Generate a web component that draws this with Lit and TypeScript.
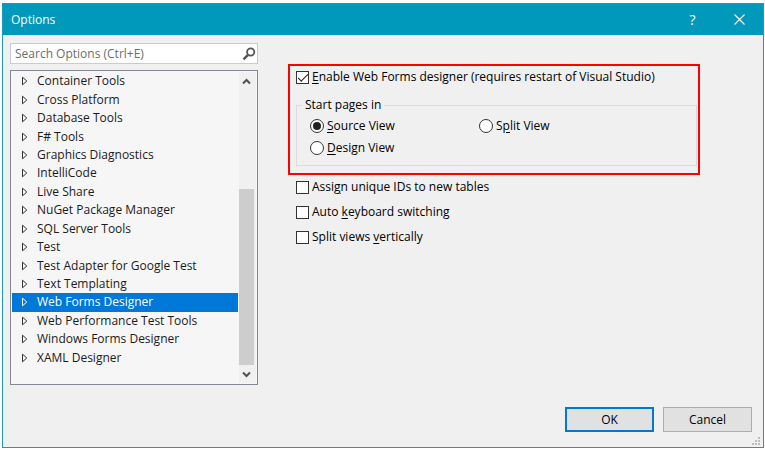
import { LitElement, html, css, svg } from "lit";
import { customElement, state } from "lit/decorators.js";
import { classMap } from "lit/directives/class-map.js";

const PAGES = [
  "Container Tools",
  "Cross Platform",
  "Database Tools",
  "F# Tools",
  "Graphics Diagnostics",
  "IntelliCode",
  "Live Share",
  "NuGet Package Manager",
  "SQL Server Tools",
  "Test",
  "Test Adapter for Google Test",
  "Text Templating",
  "Web Forms Designer",
  "Web Performance Test Tools",
  "Windows Forms Designer",
  "XAML Designer",
];

const GRIP = [[6, 0], [3, 3], [6, 3], [0, 6], [3, 6], [6, 6]];

@customElement("app-root")
export class AppRoot extends LitElement {
  @state() private selected = "Web Forms Designer";

  static styles = css`
    :host {
      display: block;
      box-sizing: border-box;
      min-height: 100vh;
      padding: 3px 1px 2px 2px;
      background: #fff;
      color: #1b1b1b;
      font: 12px/16px "Open Sans", "Noto Sans", sans-serif;
    }
    * {
      box-sizing: border-box;
    }
    button,
    input {
      font: inherit;
      color: inherit;
      margin: 0;
    }
    .dialog {
      position: relative;
      display: flex;
      flex-direction: column;
      min-height: calc(100vh - 5px);
      border: 1px solid #1a9bb8;
      background: #f0f0f0;
    }
    .titlebar {
      display: flex;
      align-items: center;
      height: 31px;
      padding-left: 8px;
      background: #0099bc;
      color: #fff;
    }
    .title {
      flex: 1;
      margin: 0;
      font: inherit;
    }
    .caption {
      display: grid;
      place-items: center;
      width: 47px;
      height: 31px;
      padding: 0;
      border: 0;
      background: none;
      font-size: 14px;
    }
    .content {
      flex: 1;
      display: grid;
      grid-template-columns: 248px minmax(0, 1fr);
      column-gap: 30px;
      padding: 8px 63px 0 7px;
    }
    .nav {
      display: flex;
      flex-direction: column;
      gap: 6px;
    }
    .search {
      display: flex;
      align-items: center;
      height: 21px;
      padding: 0 1px 0 4px;
      border: 1px solid #c6cadb;
      background: #fff;
    }
    .search input {
      flex: 1;
      min-width: 0;
      padding: 0;
      border: 0;
      outline: 0;
      background: none;
    }
    .search input::placeholder {
      color: #6d6d6d;
      opacity: 1;
    }
    .search button {
      display: flex;
      padding: 0;
      border: 0;
      background: none;
    }
    .treebox {
      flex: 1;
      display: flex;
      padding: 1px;
      border: 1px solid #828790;
      background: #f6f6f6;
    }
    .tree {
      flex: 1;
      display: grid;
      grid-auto-rows: 1fr;
      margin: 0;
      padding: 0 1px 16px 0;
      list-style: none;
    }
    .item {
      display: flex;
      align-items: center;
      gap: 8px;
      padding-left: 9px;
    }
    .item.selected {
      background: #0078d7;
      color: #fff;
    }
    .scrollbar {
      display: flex;
      flex-direction: column;
      width: 17px;
      padding-right: 2px;
      background: #f0f0f0;
    }
    .scrollbar button {
      display: grid;
      place-items: center;
      height: 18px;
      padding: 0;
      border: 0;
      background: none;
    }
    .track {
      flex: 1;
      display: flex;
      flex-direction: column;
      justify-content: flex-end;
    }
    .thumb {
      height: 64%;
      background: #cdcdcd;
    }
    .page {
      display: flex;
      flex-direction: column;
      align-items: stretch;
      padding-top: 21px;
    }
    .highlight {
      padding: 2px 1px 7px 6px;
      border: 2px solid #f00;
    }
    .choice {
      display: flex;
      align-items: center;
      gap: 3px;
      height: 18px;
      color: #000;
    }
    .choice input {
      appearance: none;
      flex: none;
      display: grid;
      place-content: center;
      width: 13px;
      height: 13px;
      border: 1px solid #333;
      background: #fff;
    }
    .choice input[type="radio"] {
      width: 14px;
      height: 14px;
      border-radius: 50%;
    }
    .choice input[type="radio"]:checked::before {
      content: "";
      width: 8px;
      height: 8px;
      border-radius: 50%;
      background: #222;
    }
    .choice input[type="checkbox"]:checked::before {
      content: "";
      width: 9px;
      height: 4px;
      border: solid #222;
      border-width: 0 0 1px 1px;
      transform: translateY(-1px) rotate(-45deg);
    }
    u {
      text-underline-offset: 2px;
    }
    .group {
      display: grid;
      grid-template-columns: 169px 1fr;
      row-gap: 4px;
      min-width: 0;
      margin: 11px 0 0;
      padding: 4px 12px 8px 13px;
      border: 1px solid #dcdcdc;
    }
    .group legend {
      margin-left: -8px;
      padding: 0 3px;
      color: #000;
    }
    .more {
      display: grid;
      row-gap: 7px;
      padding: 3px 0 0 8px;
    }
    .footer {
      display: flex;
      justify-content: flex-end;
      gap: 9px;
      padding: 22px 11px 15px;
    }
    .action {
      width: 89px;
      height: 25px;
      padding: 0;
      border: 1px solid #adadad;
      background: #e1e1e1;
      color: #000;
    }
    .action.primary {
      border: 2px solid #0078d7;
    }
    .grip {
      position: absolute;
      right: 3px;
      bottom: 2px;
    }
  `;

  private chevron(up: boolean) {
    return html`<svg width="9" height="7" viewBox="0 0 9 7" fill="none" stroke="#505050" stroke-width="2" aria-hidden="true">
      <path d=${up ? "M1 5.5 4.5 2 8 5.5" : "M1 1.5 4.5 5 8 1.5"} />
    </svg>`;
  }

  private renderItem(name: string) {
    const active = name === this.selected;
    return html`<li
      role="treeitem"
      aria-selected=${active}
      class=${classMap({ item: true, selected: active })}
      @click=${() => (this.selected = name)}
    >
      <svg width="8" height="10" viewBox="0 0 8 10" fill="none" stroke=${active ? "#fff" : "#333"} aria-hidden="true">
        <path d="M1.500 1.200v7.600L5.800 5z" />
      </svg>
      <span>${name}</span>
    </li>`;
  }

  render() {
    return html`
      <section class="dialog" role="dialog" aria-labelledby="title">
        <header class="titlebar">
          <h1 class="title" id="title">Options</h1>
          <button class="caption" aria-label="Help">?</button>
          <button class="caption" aria-label="Close">
            <svg width="11" height="11" viewBox="0 0 11 11" stroke="#fff" stroke-width="1.1" aria-hidden="true">
              <path d="M.5.5l10 10M10.500.5l-10 10" />
            </svg>
          </button>
        </header>

        <main class="content">
          <nav class="nav">
            <div class="search">
              <input type="text" aria-label="Search Options" placeholder="Search Options (Ctrl+E)" />
              <button aria-label="Search">
                <svg width="14" height="14" viewBox="0 0 14 14" fill="none" stroke="#555" aria-hidden="true">
                  <circle cx="8.700" cy="5" r="3.600" stroke-width="1.800" />
                  <path d="M6 7.800 1.500 12.300" stroke-width="2.500" />
                </svg>
              </button>
            </div>
            <div class="treebox">
              <ul class="tree" role="tree">
                ${PAGES.map((name) => this.renderItem(name))}
              </ul>
              <div class="scrollbar">
                <button aria-label="Scroll up">${this.chevron(true)}</button>
                <div class="track"><div class="thumb"></div></div>
                <button aria-label="Scroll down">${this.chevron(false)}</button>
              </div>
            </div>
          </nav>

          <div class="page">
            <div class="highlight">
              <label class="choice">
                <input type="checkbox" checked />
                <span><u>E</u>nable Web Forms designer (requires restart of Visual Studio)</span>
              </label>
              <fieldset class="group">
                <legend>Start pages in</legend>
                <label class="choice"><input type="radio" name="view" checked /><span><u>S</u>ource View</span></label>
                <label class="choice"><input type="radio" name="view" /><span>S<u>p</u>lit View</span></label>
                <label class="choice"><input type="radio" name="view" /><span><u>D</u>esign View</span></label>
              </fieldset>
            </div>
            <div class="more">
              <label class="choice"><input type="checkbox" /><span>Assi<u>g</u>n unique IDs to new tables</span></label>
              <label class="choice"><input type="checkbox" /><span>Auto <u>k</u>eyboard switching</span></label>
              <label class="choice"><input type="checkbox" /><span>Split views <u>v</u>ertically</span></label>
            </div>
          </div>
        </main>

        <footer class="footer">
          <button class="action primary">OK</button>
          <button class="action">Cancel</button>
        </footer>
        <svg class="grip" width="8" height="8" fill="#bdbdbd" aria-hidden="true">
          ${GRIP.map(([x, y]) => svg`<rect x=${x} y=${y} width="2" height="2" />`)}
        </svg>
      </section>
    `;
  }
}
